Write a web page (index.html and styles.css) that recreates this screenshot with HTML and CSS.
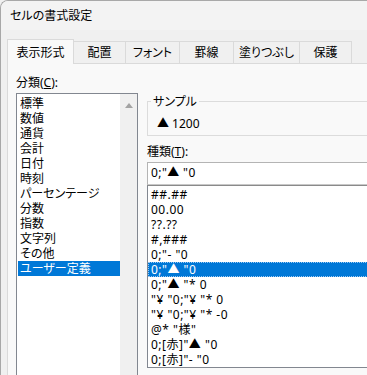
FILE: index.html
```html
<!DOCTYPE html>
<html lang="ja">
<head>
<meta charset="utf-8">
<title>セルの書式設定</title>
<link rel="stylesheet" href="styles.css">
</head>
<body>
<div class="window">
  <div class="titlebar">セルの書式設定</div>
  <div class="tabs">
    <div class="tab active w1">表示形式</div>
    <div class="tab w2">配置</div>
    <div class="tab w3">フォント</div>
    <div class="tab w3">罫線</div>
    <div class="tab w1b">塗りつぶし</div>
    <div class="tab w2">保護</div>
  </div>
  <div class="panel">
    <div class="col-left">
      <div class="label">分類(<u>C</u>):</div>
      <div class="listbox">
        <ul class="items">
          <li>標準</li>
          <li>数値</li>
          <li>通貨</li>
          <li>会計</li>
          <li>日付</li>
          <li>時刻</li>
          <li>パーセンテージ</li>
          <li>分数</li>
          <li>指数</li>
          <li>文字列</li>
          <li>その他</li>
          <li class="sel">ユーザー定義</li>
        </ul>
        <div class="scrollbar"><span class="arrow"></span></div>
      </div>
    </div>
    <div class="col-right">
      <fieldset class="sample">
        <legend>サンプル</legend>
        <div class="sample-value">▲ 1200</div>
      </fieldset>
      <div class="label type-label">種類(<u>T</u>):</div>
      <div class="input">0;"▲ "0</div>
      <ul class="fmtlist">
        <li>##.##</li>
        <li>00.00</li>
        <li>??.??</li>
        <li>#,###</li>
        <li>0;"- "0</li>
        <li class="sel focus">0;"▲ "0</li>
        <li>0;"▲ "* 0</li>
        <li>"¥ "0;"¥ "* 0</li>
        <li>"¥ "0;"¥ "* -0</li>
        <li>@* "様"</li>
        <li>0;[赤]"▲ "0</li>
        <li>0;[赤]"- "0</li>
      </ul>
    </div>
  </div>
</div>
</body>
</html>
```

FILE: styles.css
```css
html, body {
  margin: 0;
  padding: 0;
  background: #f0f0f0;
}
body {
  font-family: "Noto Sans", "Noto Sans CJK JP", sans-serif;
  font-size: 12px;
  color: #000;
  font-feature-settings: "palt";
}
.window {
  width: 366px;
  height: 374px;
  overflow: hidden;
  background: #f0f0f0;
  border-top: 1px solid #a8a8a8;
  border-left: 1px solid #a8a8a8;
  border-top-left-radius: 8px;
}
.titlebar {
  height: 29px;
  line-height: 29px;
  padding-left: 9px;
  background: #f3f3f3;
  white-space: nowrap;
}
.tabs {
  display: flex;
  align-items: flex-end;
  height: 33px;
  padding-left: 6px;
  box-sizing: border-box;
  background: #f0f0f0;
}
.tab {
  position: relative;
  height: 22px;
  line-height: 21px;
  box-sizing: border-box;
  text-align: center;
  background: #f0f0f0;
  border-top: 1px solid #dadada;
  border-right: 1px solid #dadada;
  white-space: nowrap;
}
.tab.active {
  height: 25px;
  line-height: 25px;
  margin-bottom: -1px;
  z-index: 1;
  background: #f9f9f9;
  border-left: 1px solid #dadada;
}
.w1 { width: 67px; }
.w1b { width: 66px; }
.w2 { width: 52px; }
.w3 { width: 54px; }
.panel {
  width: 430px;
  height: 320px;
  margin-left: 6px;
  box-sizing: border-box;
  background: #f9f9f9;
  border-top: 1px solid #dadada;
  border-left: 1px solid #dadada;
  padding-left: 8px;
  display: grid;
  grid-template-columns: 122px 1fr;
  column-gap: 9px;
}
.label {
  line-height: 15px;
  white-space: nowrap;
}
.col-left {
  padding-top: 11px;
}
.col-left .label {
  margin-bottom: 3px;
}
.listbox {
  display: flex;
  height: 300px;
  border: 1px solid #828790;
  background: #fff;
}
.items, .fmtlist {
  list-style: none;
  margin: 0;
  padding: 0;
}
.items {
  flex: 1;
  padding: 2px 0 0 1px;
}
.items li {
  height: 15px;
  line-height: 15px;
  padding-left: 2px;
  white-space: nowrap;
}
.sel {
  background: #0078d7;
  color: #fff;
}
.scrollbar {
  width: 17px;
  background: #f0f0f0;
  display: flex;
  justify-content: center;
  padding-top: 9px;
  box-sizing: border-box;
}
.arrow {
  width: 0;
  height: 0;
  border-left: 4px solid transparent;
  border-right: 4px solid transparent;
  border-bottom: 5px solid #a3a3a3;
}
.col-right {
  padding-top: 30px;
}
.sample {
  margin: 0;
  padding: 7px 0 4px 3px;
  border: 1px solid #dcdcdc;
  min-width: 0;
}
.sample legend {
  padding: 0 2px;
  line-height: 15px;
}
.sample-value {
  padding-left: 6px;
  line-height: 15px;
}
.type-label {
  margin-top: 8px;
  margin-bottom: 3px;
}
.input {
  background: #fff;
  border: 1px solid #b4b4b4;
  border-bottom-color: #c8c8c8;
  padding: 2px 0 4px 3px;
  line-height: 15px;
  letter-spacing: 0.4px;
  white-space: nowrap;
}
.fmtlist {
  height: 183px;
  box-sizing: border-box;
  background: #fff;
  border: 1px solid #828790;
  border-top-color: #8a8a8a;
  padding-top: 1px;
}
.fmtlist li {
  height: 15px;
  line-height: 15px;
  padding-left: 3px;
  letter-spacing: 0.5px;
  white-space: pre;
}
.fmtlist li.focus {
  outline: 1px dotted #9cc9f2;
  outline-offset: -1px;
}
```
